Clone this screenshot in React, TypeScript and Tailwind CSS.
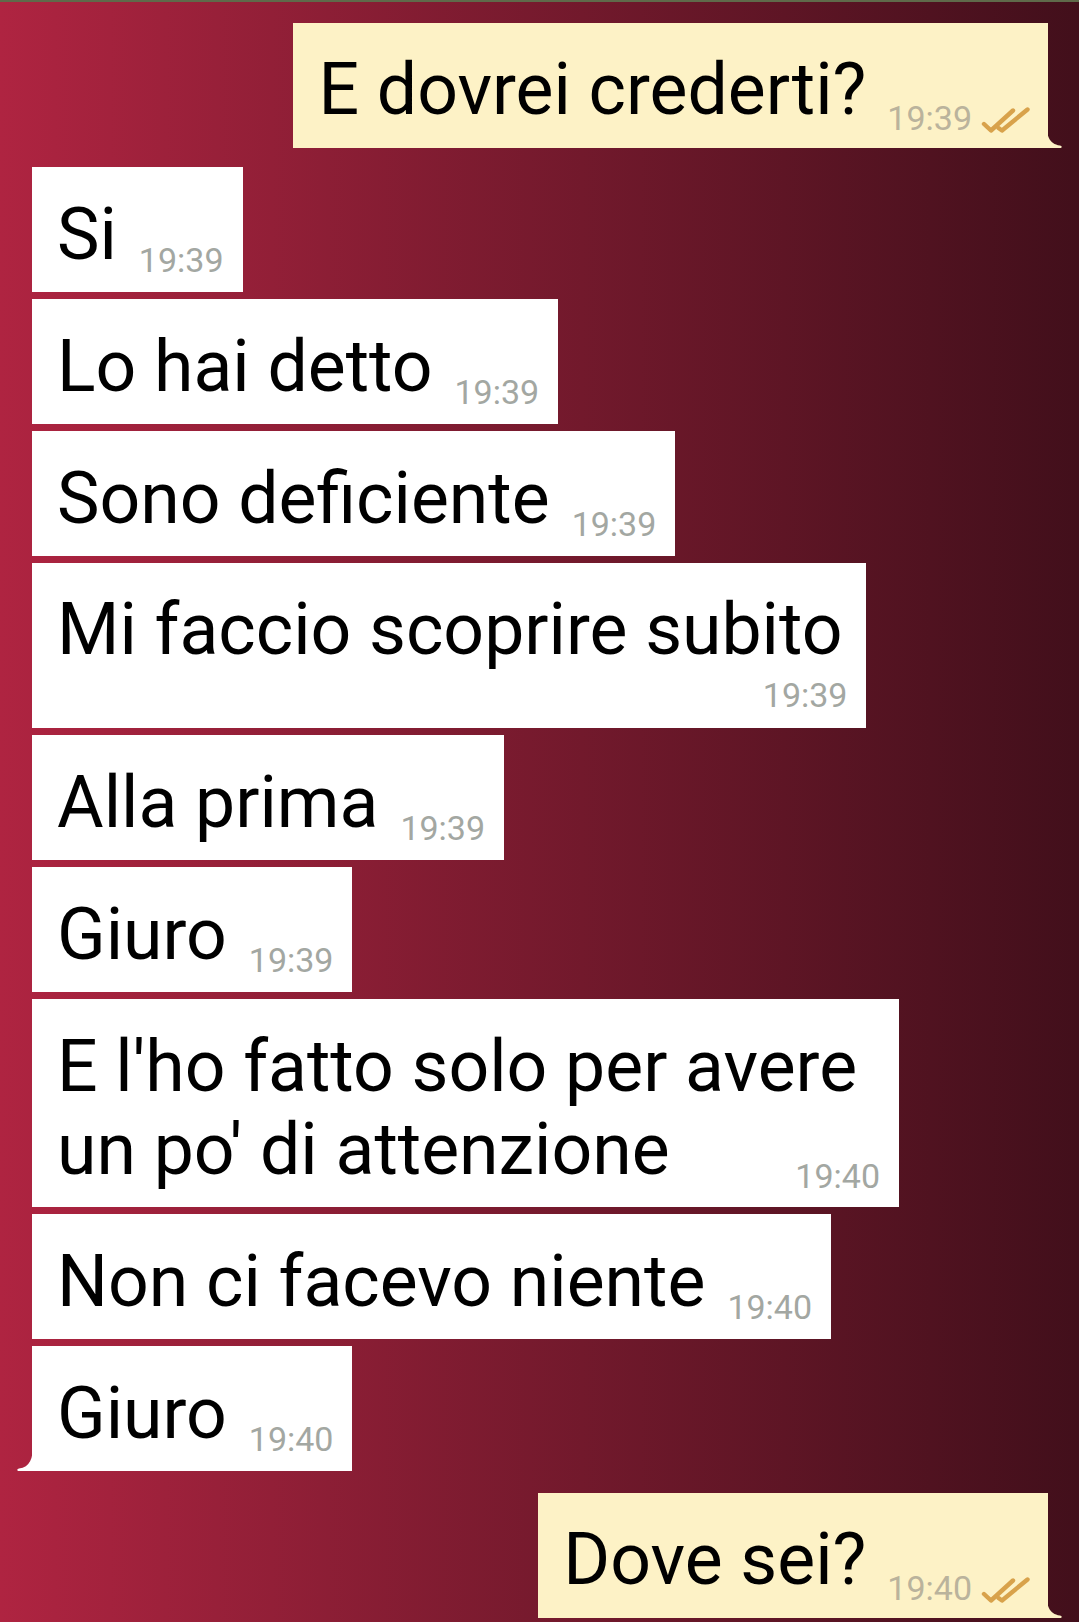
import React from "react";

const SENT_BG = "#fdf2c6";

function Checks() {
  return (
    <svg width="49" height="27" viewBox="0 0 49 27" className="ml-[9px] mb-[1px] shrink-0">
      <g fill="none" stroke="#d8a24b" strokeWidth="4.4" strokeLinecap="round" strokeLinejoin="round">
        <path d="M3 17 L10 23.5 L32 3.5" />
        <path d="M17.5 21 L21 23.5 L46.5 2.5" />
      </g>
    </svg>
  );
}

function SentTail() {
  return (
    <svg width="17" height="31" viewBox="0 0 17 31" className="absolute right-[-15px] bottom-0">
      <path d="M0 0 C0 19 3 27 14 28.5 Q17 29.5 15 31 L0 31 Z" fill={SENT_BG} />
    </svg>
  );
}

function RecvTail() {
  return (
    <svg width="17" height="27" viewBox="0 0 17 27" className="absolute left-[-16px] bottom-0">
      <path d="M17 0 C17 15 14 23 3 24.5 Q0 25.5 2 27 L17 27 Z" fill="#ffffff" />
    </svg>
  );
}

function Time({ t, sent }: { t: string; sent?: boolean }) {
  return (
    <span
      className={
        "text-[34px] leading-[34px] whitespace-nowrap " +
        (sent ? "text-[#bab39c]" : "text-[#a3a7a2]")
      }
    >
      {t}
    </span>
  );
}

function Recv({ text, time, tail }: { text: string; time: string; tail?: boolean }) {
  return (
    <div className="flex pl-[32px]">
      <div className="relative flex items-end bg-white pl-[25px] pr-[19px] pt-[26px] pb-[13px]">
        <span className="text-[71.5px] leading-[83px] mb-[3px] text-black whitespace-nowrap">{text}</span>
        <span className="ml-[22px]">
          <Time t={time} />
        </span>
        {tail && <RecvTail />}
      </div>
    </div>
  );
}

function Sent({ text, time }: { text: string; time: string }) {
  return (
    <div className="flex justify-end pr-[31px]">
      <div className="relative flex items-end bg-[#fdf2c6] pl-[25px] pr-[18px] pt-[25px] pb-[13px]">
        <span className="text-[71.5px] leading-[83px] mb-[4px] text-black whitespace-nowrap">{text}</span>
        <span className="ml-[21px] flex items-end">
          <Time t={time} sent />
          <Checks />
        </span>
        <SentTail />
      </div>
    </div>
  );
}

export default function App() {
  return (
    <div
      className="w-full h-[1622px] overflow-hidden bg-gradient-to-r from-[#af2441] to-[#420f1b] flex flex-col"
      style={{ fontFamily: "Roboto, 'Noto Sans', sans-serif" }}
    >
      <div className="h-[2px] bg-[#5f6a4a] shrink-0" />
      <div className="flex flex-col pt-[21px]">
        <Sent text="E dovrei crederti?" time="19:39" />
        <div className="h-[19px]" />
        <div className="flex flex-col gap-[7px]">
          <Recv text="Si" time="19:39" />
          <Recv text="Lo hai detto" time="19:39" />
          <Recv text="Sono deficiente" time="19:39" />
          <div className="flex pl-[32px]">
            <div className="flex flex-col bg-white pl-[25px] pr-[19px] pt-[25px] pb-[16px]">
              <span className="text-[71.5px] leading-[83px] text-black whitespace-nowrap mr-[5px]">
                Mi faccio scoprire subito
              </span>
              <div className="flex justify-end mt-[7px]">
                <Time t="19:39" />
              </div>
            </div>
          </div>
          <Recv text="Alla prima" time="19:39" />
          <Recv text="Giuro" time="19:39" />
          <div className="flex pl-[32px]">
            <div className="flex flex-col w-[867px] bg-white pl-[25px] pr-[19px] pt-[26px] pb-[14px]">
              <span className="text-[71.5px] leading-[83px] text-black whitespace-nowrap">
                E l'ho fatto solo per avere
              </span>
              <div className="flex items-end justify-between">
                <span className="text-[71.5px] leading-[83px] mb-[2px] text-black whitespace-nowrap">
                  un po' di attenzione
                </span>
                <Time t="19:40" />
              </div>
            </div>
          </div>
          <Recv text="Non ci facevo niente" time="19:40" />
          <Recv text="Giuro" time="19:40" tail />
        </div>
        <div className="h-[22px]" />
        <Sent text="Dove sei?" time="19:40" />
      </div>
    </div>
  );
}
